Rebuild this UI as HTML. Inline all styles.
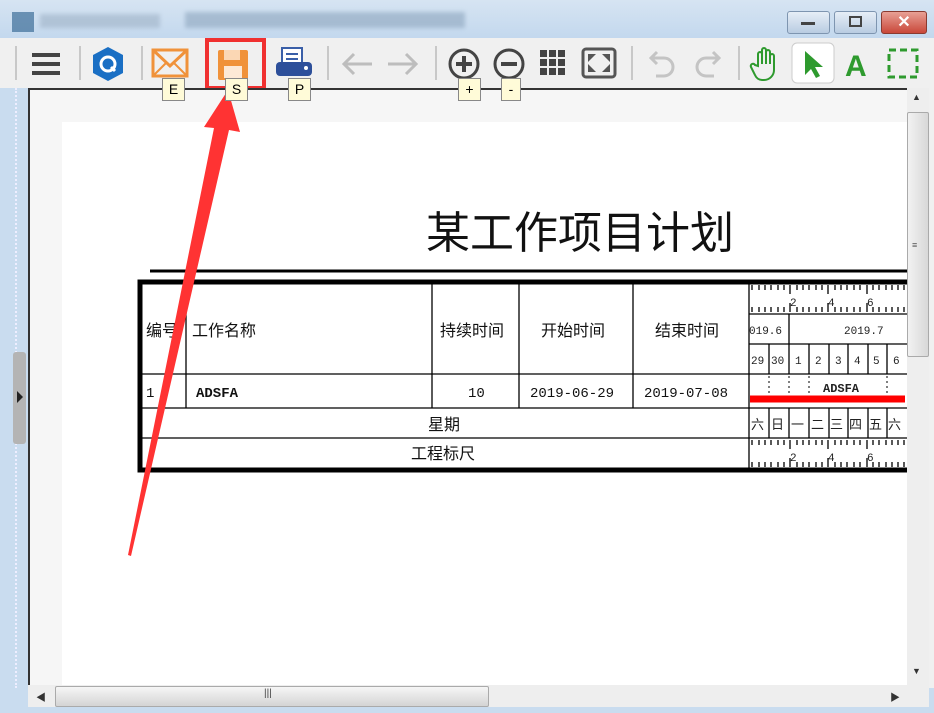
<!DOCTYPE html>
<html><head><meta charset="utf-8"><style>
body{margin:0;width:934px;height:713px;overflow:hidden;background:#f0f0f0;font-family:"Liberation Sans","Noto Sans CJK SC",sans-serif;position:relative}
.a{position:absolute}
</style></head><body>
<!-- title bar -->
<div class="a" style="left:0;top:0;width:934px;height:38px;background:linear-gradient(#d6e4f2,#c3d8ee)"></div>
<div class="a" style="left:12px;top:12px;width:22px;height:20px;background:#3d6d99;opacity:.7"></div>
<div class="a" style="left:40px;top:14px;width:120px;height:14px;background:#9fb2c6;opacity:.6;filter:blur(2px)"></div>
<div class="a" style="left:185px;top:12px;width:280px;height:16px;background:#8da5bd;opacity:.6;filter:blur(2px)"></div>
<div class="a" style="left:787px;top:11px;width:41px;height:21px;border:1px solid #7e95b0;border-radius:3px;background:linear-gradient(#e6eef7,#b9cce2)"></div>
<div class="a" style="left:801px;top:22px;width:14px;height:3px;background:#444"></div>
<div class="a" style="left:834px;top:11px;width:41px;height:21px;border:1px solid #7e95b0;border-radius:3px;background:linear-gradient(#e6eef7,#b9cce2)"></div>
<div class="a" style="left:849px;top:16px;width:9px;height:7px;border:2px solid #444"></div>
<div class="a" style="left:881px;top:11px;width:44px;height:21px;border:1px solid #8a3a30;border-radius:3px;background:linear-gradient(#e8a095,#c9483a);color:#fff;font-weight:bold;font-size:16px;text-align:center;line-height:21px">✕</div>
<!-- toolbar -->
<svg class="a" style="left:0;top:38px" width="934" height="52">
<g stroke="#c8c8c8" stroke-width="2"><line x1="16" y1="8" x2="16" y2="42"/><line x1="80" y1="8" x2="80" y2="42"/><line x1="142" y1="8" x2="142" y2="42"/><line x1="328" y1="8" x2="328" y2="42"/><line x1="436" y1="8" x2="436" y2="42"/><line x1="632" y1="8" x2="632" y2="42"/><line x1="739" y1="8" x2="739" y2="42"/></g>
<g fill="#444"><rect x="32" y="15" width="28" height="4"/><rect x="32" y="24" width="28" height="4"/><rect x="32" y="33" width="28" height="4"/></g>
<polygon points="108,9 123,17 123,35 108,43 93,35 93,17" fill="#1a6fc4"/><circle cx="108" cy="26" r="7" fill="none" stroke="#fff" stroke-width="3"/><line x1="111" y1="29" x2="115" y2="33" stroke="#fff" stroke-width="3"/>
<rect x="153" y="12" width="34" height="26" fill="none" stroke="#f0923a" stroke-width="3"/><polyline points="153,12 170,28 187,12" fill="none" stroke="#f0923a" stroke-width="3"/><line x1="153" y1="38" x2="166" y2="25" stroke="#f0923a" stroke-width="2"/><line x1="187" y1="38" x2="174" y2="25" stroke="#f0923a" stroke-width="2"/>
<rect x="218" y="12" width="30" height="30" rx="2" fill="#f0923a"/><rect x="224" y="12" width="16" height="10" fill="#fbd7b4"/><rect x="224" y="28" width="18" height="12" fill="#fde9d6"/>
<rect x="282" y="10" width="20" height="20" fill="#fff" stroke="#3a5fa8" stroke-width="2"/><g stroke="#3a5fa8" stroke-width="2"><line x1="286" y1="16" x2="298" y2="16"/><line x1="286" y1="21" x2="298" y2="21"/></g><rect x="276" y="24" width="36" height="14" rx="4" fill="#2d4f9a"/><circle cx="306" cy="30" r="2" fill="#fff"/>
<g stroke="#bdbdbd" stroke-width="3" fill="none"><line x1="344" y1="26" x2="372" y2="26"/><polyline points="354,16 344,26 354,36"/><line x1="388" y1="26" x2="416" y2="26"/><polyline points="406,16 416,26 406,36"/></g>
<circle cx="464" cy="26" r="14" fill="none" stroke="#444" stroke-width="3"/><line x1="456" y1="26" x2="472" y2="26" stroke="#444" stroke-width="4"/><line x1="464" y1="18" x2="464" y2="34" stroke="#444" stroke-width="4"/>
<circle cx="509" cy="26" r="14" fill="none" stroke="#444" stroke-width="3"/><line x1="501" y1="26" x2="517" y2="26" stroke="#444" stroke-width="4"/>
<g fill="#444"><rect x="540" y="12" width="7" height="7"/><rect x="549" y="12" width="7" height="7"/><rect x="558" y="12" width="7" height="7"/><rect x="540" y="21" width="7" height="7"/><rect x="549" y="21" width="7" height="7"/><rect x="558" y="21" width="7" height="7"/><rect x="540" y="30" width="7" height="7"/><rect x="549" y="30" width="7" height="7"/><rect x="558" y="30" width="7" height="7"/></g>
<rect x="583" y="11" width="32" height="28" rx="3" fill="none" stroke="#555" stroke-width="3"/><g fill="#555"><polygon points="588,16 596,16 588,24"/><polygon points="610,16 602,16 610,24"/><polygon points="588,34 596,34 588,26"/><polygon points="610,34 602,34 610,26"/></g>
<g stroke="#c4c4c4" stroke-width="3" fill="none"><path d="M652 20 H664 A9 9 0 0 1 664 38 H656"/><polyline points="657,14 651,20 657,26"/><path d="M718 20 H706 A9 9 0 0 0 706 38 H714"/><polyline points="713,14 719,20 713,26"/></g>
<path d="M758 28 V16 a2 2 0 0 1 4 0 V26 V12 a2 2 0 0 1 4 0 V26 V14 a2 2 0 0 1 4 0 V26 V18 a2 2 0 0 1 4 0 V32 a10 10 0 0 1 -10 10 h-2 a8 8 0 0 1 -7 -5 l-4 -8 a2 2 0 0 1 4 -2 z" fill="none" stroke="#2e9a2e" stroke-width="2"/>
<rect x="792" y="5" width="42" height="40" rx="5" fill="#fff" stroke="#ccc"/><polygon points="805,13 805,37 811,31 816,40 820,38 815,29 823,29" fill="#2e9a2e"/>
<text x="845" y="38" font-family="Liberation Sans" font-weight="bold" font-size="30" fill="#2e9a2e">A</text>
<rect x="889" y="12" width="28" height="27" fill="none" stroke="#2e9a2e" stroke-width="3" stroke-dasharray="7 4"/>
</svg>
<div class="a" style="left:205px;top:38px;width:53px;height:44px;border:4px solid #f03030"></div>
<!-- left strip -->
<div class="a" style="left:0;top:88px;width:28px;height:600px;background:#c9dcef"></div>
<div class="a" style="left:15px;top:88px;width:3px;height:600px;border-left:2px dotted #eef"></div>
<div class="a" style="left:13px;top:352px;width:13px;height:92px;background:#b4b4b4;border-radius:3px"></div>
<div class="a" style="left:17px;top:391px;width:0;height:0;border-left:6px solid #222;border-top:6px solid transparent;border-bottom:6px solid transparent"></div>
<div class="a" style="left:0;top:688px;width:934px;height:25px;background:#c9dcef"></div>
<!-- document -->
<div class="a" style="left:28px;top:88px;width:879px;height:597px;background:#f6f6f6;border-top:2px solid #333;border-left:2px solid #333;box-sizing:border-box"></div>
<div class="a" style="left:62px;top:122px;width:845px;height:563px;background:#fff"></div>
<!-- vertical scrollbar -->
<div class="a" style="left:907px;top:88px;width:22px;height:597px;background:#eee"></div>
<div class="a" style="left:907px;top:112px;width:20px;height:243px;background:linear-gradient(90deg,#f2f2f2,#d8d8d8);border:1px solid #aaa;border-radius:2px"></div>
<div class="a" style="left:912px;top:92px;font-size:9px;color:#333">▲</div>
<div class="a" style="left:912px;top:666px;font-size:9px;color:#333">▼</div>
<div class="a" style="left:912px;top:240px;font-size:9px;color:#555">≡</div>
<!-- horizontal scrollbar -->
<div class="a" style="left:28px;top:685px;width:901px;height:22px;background:#eee"></div>
<div class="a" style="left:55px;top:686px;width:432px;height:19px;background:linear-gradient(#f6f6f6,#d4d4d4);border:1px solid #aaa;border-radius:2px"></div>
<div class="a" style="left:264px;top:688px;font-size:10px;color:#444">|||</div>
<div class="a" style="left:36px;top:689px;font-size:10px;color:#333">◀</div>
<div class="a" style="left:890px;top:689px;font-size:10px;color:#333">▶</div>
<!-- content svg -->
<svg class="a" style="left:0;top:0" width="907" height="685" font-family="Liberation Mono,Noto Sans CJK SC,monospace">
<text x="580" y="248" font-size="44" text-anchor="middle" font-family="Noto Sans CJK SC,sans-serif" fill="#111">某工作项目计划</text>
<line x1="150" y1="271" x2="907" y2="271" stroke="#000" stroke-width="3"/>
<rect x="140" y="282" width="780" height="188" fill="none" stroke="#000" stroke-width="5"/>
<g stroke="#000" stroke-width="1.3">
<line x1="142" y1="374" x2="907" y2="374"/><line x1="142" y1="408" x2="907" y2="408"/><line x1="142" y1="438" x2="907" y2="438"/>
<line x1="186" y1="284" x2="186" y2="408"/><line x1="432" y1="284" x2="432" y2="408"/><line x1="519" y1="284" x2="519" y2="408"/><line x1="633" y1="284" x2="633" y2="408"/><line x1="749" y1="284" x2="749" y2="468"/>
<line x1="749" y1="314" x2="907" y2="314"/><line x1="749" y1="344" x2="907" y2="344"/>
<line x1="789" y1="314" x2="789" y2="344"/>
<g><line x1="769" y1="344" x2="769" y2="374"/><line x1="789" y1="344" x2="789" y2="374"/><line x1="809" y1="344" x2="809" y2="374"/><line x1="829" y1="344" x2="829" y2="374"/><line x1="848" y1="344" x2="848" y2="374"/><line x1="868" y1="344" x2="868" y2="374"/><line x1="887" y1="344" x2="887" y2="374"/></g>
<g transform="translate(0,64)"><line x1="769" y1="344" x2="769" y2="374"/><line x1="789" y1="344" x2="789" y2="374"/><line x1="809" y1="344" x2="809" y2="374"/><line x1="829" y1="344" x2="829" y2="374"/><line x1="848" y1="344" x2="848" y2="374"/><line x1="868" y1="344" x2="868" y2="374"/><line x1="887" y1="344" x2="887" y2="374"/></g>
</g>
<g stroke="#000" stroke-dasharray="2 3"><line x1="769" y1="376" x2="769" y2="396"/><line x1="789" y1="376" x2="789" y2="396"/><line x1="809" y1="376" x2="809" y2="396"/><line x1="887" y1="376" x2="887" y2="396"/></g>
<g stroke="#000" stroke-width="1.3">
<path d="M752 285v5M759 285v5M765 285v5M771 285v5M778 285v5M784 285v5M790 285v9M797 285v5M803 285v5M809 285v5M816 285v5M822 285v5M828 285v9M835 285v5M841 285v5M847 285v5M854 285v5M860 285v5M867 285v9M873 285v5M879 285v5M886 285v5M892 285v5M898 285v5M904 285v5"/>
<path d="M752 312v-5M759 312v-5M765 312v-5M771 312v-5M778 312v-5M784 312v-5M790 312v-9M797 312v-5M803 312v-5M809 312v-5M816 312v-5M822 312v-5M828 312v-9M835 312v-5M841 312v-5M847 312v-5M854 312v-5M860 312v-5M867 312v-9M873 312v-5M879 312v-5M886 312v-5M892 312v-5M898 312v-5M904 312v-5"/>
<g transform="translate(0,155)"><path d="M752 285v5M759 285v5M765 285v5M771 285v5M778 285v5M784 285v5M790 285v9M797 285v5M803 285v5M809 285v5M816 285v5M822 285v5M828 285v9M835 285v5M841 285v5M847 285v5M854 285v5M860 285v5M867 285v9M873 285v5M879 285v5M886 285v5M892 285v5M898 285v5M904 285v5"/>
<path d="M752 312v-5M759 312v-5M765 312v-5M771 312v-5M778 312v-5M784 312v-5M790 312v-9M797 312v-5M803 312v-5M809 312v-5M816 312v-5M822 312v-5M828 312v-9M835 312v-5M841 312v-5M847 312v-5M854 312v-5M860 312v-5M867 312v-9M873 312v-5M879 312v-5M886 312v-5M892 312v-5M898 312v-5M904 312v-5"/></g>
</g>
<g font-size="11" fill="#222"><text x="790" y="306">2</text><text x="828" y="306">4</text><text x="867" y="306">6</text><text x="790" y="461">2</text><text x="828" y="461">4</text><text x="867" y="461">6</text></g>
<g font-size="11" fill="#222"><text x="749" y="334">019.6</text><text x="844" y="334">2019.7</text>
<text x="751" y="364">29</text><text x="771" y="364">30</text><text x="795" y="364">1</text><text x="815" y="364">2</text><text x="835" y="364">3</text><text x="854" y="364">4</text><text x="873" y="364">5</text><text x="893" y="364">6</text>
<text x="823" y="392" font-weight="bold" font-size="12">ADSFA</text></g>
<g font-size="13" fill="#222" font-family="Noto Sans CJK SC,sans-serif"><text x="751" y="429">六</text><text x="771" y="429">日</text><text x="791" y="429">一</text><text x="811" y="429">二</text><text x="830" y="429">三</text><text x="849" y="429">四</text><text x="869" y="429">五</text><text x="888" y="429">六</text></g>
<line x1="750" y1="399" x2="905" y2="399" stroke="#f00" stroke-width="7"/>
<g font-size="16" fill="#111" font-family="Noto Sans CJK SC,sans-serif"><text x="146" y="336">编号</text><text x="192" y="336">工作名称</text><text x="440" y="336">持续时间</text><text x="541" y="336">开始时间</text><text x="655" y="336">结束时间</text>
<text x="428" y="430">星期</text><text x="411" y="459">工程标尺</text></g>
<g font-size="14" fill="#111"><text x="146" y="397">1</text><text x="196" y="397" font-weight="bold">ADSFA</text><text x="468" y="397">10</text><text x="530" y="397">2019-06-29</text><text x="644" y="397">2019-07-08</text></g>
<!-- arrow -->
<polygon points="128,555 214,128 204,127 228,90 240,132 229,130 131,556" fill="#f33"/>
</svg>
<!-- key hints -->
<div class="a" style="left:162px;top:78px;width:21px;height:21px;background:#fffbd8;border:1px solid #888;font-size:14px;text-align:center;line-height:21px">E</div>
<div class="a" style="left:225px;top:78px;width:21px;height:21px;background:#fffbd8;border:1px solid #888;font-size:14px;text-align:center;line-height:21px">S</div>
<div class="a" style="left:288px;top:78px;width:21px;height:21px;background:#fffbd8;border:1px solid #888;font-size:14px;text-align:center;line-height:21px">P</div>
<div class="a" style="left:458px;top:78px;width:21px;height:21px;background:#fffbd8;border:1px solid #888;font-size:14px;text-align:center;line-height:21px">+</div>
<div class="a" style="left:501px;top:78px;width:18px;height:21px;background:#fffbd8;border:1px solid #888;font-size:14px;text-align:center;line-height:21px">-</div>
</body></html>
